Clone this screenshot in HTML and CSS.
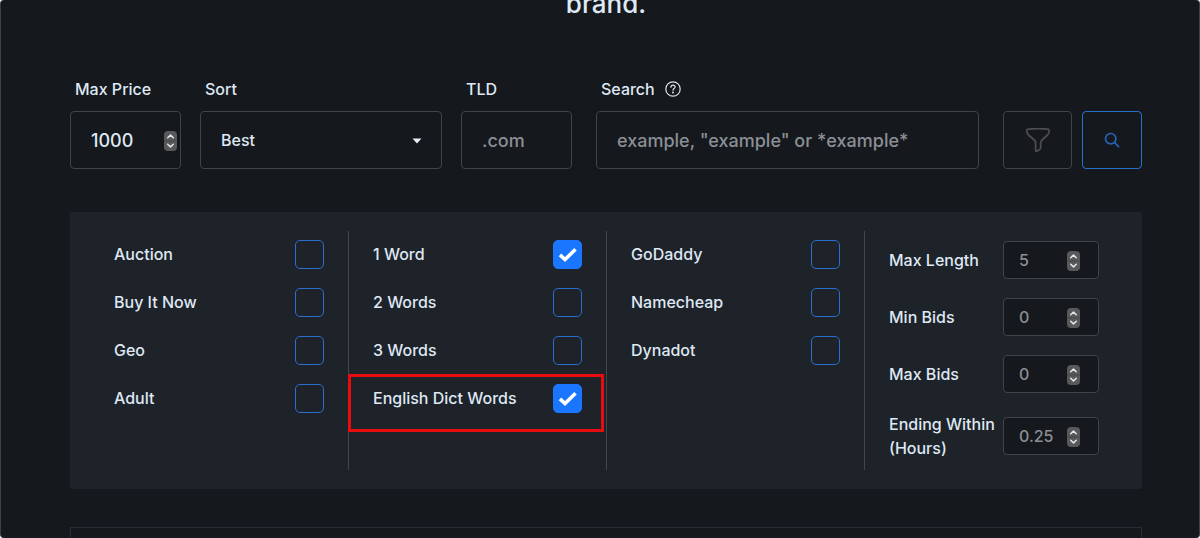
FILE: index.html
```html
<!DOCTYPE html>
<html lang="en">
<head>
<meta charset="utf-8">
<meta name="viewport" content="width=device-width, initial-scale=1">
<title>Domain search</title>
<link rel="stylesheet" href="styles.css">
</head>
<body>
<svg class="defs" aria-hidden="true">
  <symbol id="stepper" viewBox="0 0 13 20">
    <rect width="13" height="20" rx="4" fill="#58595b"/>
    <path d="M0 10h13" stroke="#47484a"/>
    <path d="M3.7 6.8 6.5 4.1l2.8 2.7M3.7 13.2l2.8 2.7 2.8-2.7" fill="none" stroke="#e4e5e6" stroke-width="1.5" stroke-linecap="round" stroke-linejoin="round"/>
  </symbol>
</svg>
<main class="window">
  <h1 class="headline">brand.</h1>

  <form class="search">
    <div class="field field-small">
      <label for="price">Max Price</label>
      <div class="control"><input class="box" id="price" type="number" value="1000"><svg class="stepper"><use href="#stepper"/></svg></div>
    </div>
    <div class="field field-sort">
      <label for="sort">Sort</label>
      <div class="control">
        <select class="box" id="sort"><option>Best</option></select>
        <svg class="caret" viewBox="0 0 10 6"><path d="M0.5 0.5h9L5 5.5z" fill="#e6edf5"/></svg>
      </div>
    </div>
    <div class="field field-small">
      <label for="tld">TLD</label>
      <div class="control"><input class="box" id="tld" type="text" placeholder=".com"></div>
    </div>
    <div class="field field-search">
      <div class="label-row">
        <label for="query">Search</label>
        <svg class="help" viewBox="0 0 16 16" fill="none" stroke="#dfe3e8" stroke-width="1.2" stroke-linecap="round"><circle cx="8" cy="8" r="7.2"/><path d="M5.9 6.2c0-1.3.9-2.1 2.1-2.1s2.1.8 2.1 1.9c0 1.5-2.1 1.6-2.1 3.2"/><circle cx="8" cy="11.6" r=".4" fill="#dfe3e8"/></svg>
      </div>
      <div class="control"><input class="box" id="query" type="text" placeholder='example, "example" or *example*'></div>
    </div>
    <div class="actions">
      <button class="button button-filter" type="button" aria-label="Filters"><svg viewBox="0 0 24 24" fill="none" stroke="#4a4c50" stroke-width="1.8" stroke-linejoin="round"><path d="M2 1.2Q12-.1 22 1.2 23.700 1.600 23.200 3.600 23 5.700 21 7.500L16 12Q14.700 13.300 14.700 15V19.500Q14.700 21.200 13 22L10.600 23.100Q9.600 23.300 9.600 22.200V15Q9.600 13.300 8.300 12L3 7.500Q1.200 5.900.8 3.600.5 1.600 2 1.200Z"/></svg></button>
      <button class="button button-search" type="submit" aria-label="Search"><svg viewBox="0 0 16 16" fill="none" stroke="#2563bd" stroke-width="1.7" stroke-linecap="round"><circle cx="6.700" cy="6.700" r="5.200"/><path d="m10.600 10.600 4 4"/></svg></button>
    </div>
  </form>

  <section class="filters">
    <div class="column">
      <label class="option">Auction<input type="checkbox"></label>
      <label class="option">Buy It Now<input type="checkbox"></label>
      <label class="option">Geo<input type="checkbox"></label>
      <label class="option">Adult<input type="checkbox"></label>
    </div>
    <div class="column">
      <label class="option">1 Word<input type="checkbox" checked></label>
      <label class="option">2 Words<input type="checkbox"></label>
      <label class="option">3 Words<input type="checkbox"></label>
      <label class="option highlighted">English Dict Words<input type="checkbox" checked></label>
    </div>
    <div class="column">
      <label class="option">GoDaddy<input type="checkbox"></label>
      <label class="option">Namecheap<input type="checkbox"></label>
      <label class="option">Dynadot<input type="checkbox"></label>
    </div>
    <div class="column limits">
      <div class="limit"><label for="length">Max Length</label><div class="control"><input class="box" id="length" type="number" placeholder="5"><svg class="stepper"><use href="#stepper"/></svg></div></div>
      <div class="limit"><label for="minbids">Min Bids</label><div class="control"><input class="box" id="minbids" type="number" placeholder="0"><svg class="stepper"><use href="#stepper"/></svg></div></div>
      <div class="limit"><label for="maxbids">Max Bids</label><div class="control"><input class="box" id="maxbids" type="number" placeholder="0"><svg class="stepper"><use href="#stepper"/></svg></div></div>
      <div class="limit"><label for="ending">Ending Within (Hours)</label><div class="control"><input class="box" id="ending" type="number" step="0.25" placeholder="0.25"><svg class="stepper"><use href="#stepper"/></svg></div></div>
    </div>
  </section>

  <section class="results"></section>
</main>
</body>
</html>
```
FILE: styles.css
```css
* { box-sizing: border-box; }

body {
  margin: 0;
  background: #fff;
  color: #dfe8f4;
  font-family: Inter, "Liberation Sans", sans-serif;
  font-size: 16px;
  font-weight: 500;
  line-height: 24px;
}

.defs { position: absolute; width: 0; height: 0; }

.window {
  display: flex;
  flex-direction: column;
  height: 100vh;
  padding: 0 57px 0 69px;
  overflow: hidden;
  background: #15181c;
  border: 1px solid #3c3f43;
  border-width: 0 1px;
  border-radius: 4px;
}

.headline {
  flex: none;
  margin: -14px 0 55px;
  font-size: 26px;
  font-weight: 500;
  line-height: 36px;
  text-align: center;
}

.search { display: flex; align-items: flex-end; }

.field { display: flex; flex-direction: column; gap: 10px; margin-right: 19px; }
.field > label, .label-row { padding-left: 5px; }
.field-small { flex: 0 1 111px; min-width: 0; }
.field-sort { flex: 0 1 242px; min-width: 0; }
.field-search { flex: 1; min-width: 0; margin: 0 24px 0 5px; }
.label-row { display: flex; align-items: center; gap: 10px; }
.help { width: 16px; height: 16px; }

.control { position: relative; }

.box {
  display: block;
  width: 100%;
  height: 58px;
  margin: 0;
  padding: 0 20px;
  appearance: none;
  color: inherit;
  font-family: inherit;
  font-size: 18px;
  font-weight: inherit;
  background: #15181c;
  border: 1px solid #404347;
  border-radius: 4px;
}
select.box { font-size: 16px; }
.box::placeholder { color: #8b8f96; opacity: 1; }
.box[type="number"] { appearance: textfield; }
.box::-webkit-inner-spin-button { appearance: none; margin: 0; }

.stepper {
  position: absolute;
  top: 20px;
  right: 4px;
  width: 13px;
  height: 20px;
  pointer-events: none;
}

.caret {
  position: absolute;
  top: 27px;
  right: 20px;
  width: 10px;
  height: 6px;
  pointer-events: none;
}

.actions { display: flex; gap: 10px; }
.button {
  display: grid;
  place-items: center;
  height: 58px;
  padding: 0;
  background: transparent;
  border: 1px solid #404347;
  border-radius: 4px;
}
.button-filter { width: 69px; }
.button-filter svg { width: 24px; height: 24px; }
.button-search { width: 60px; border-color: #2b6ed0; }
.button-search svg { width: 16px; height: 16px; }

.filters {
  display: grid;
  grid-template-columns: repeat(4, 1fr);
  margin-top: 43px;
  padding: 19px 20px;
  background: #1e2229;
  border-radius: 2px;
}

.column {
  display: flex;
  flex-direction: column;
  gap: 19px;
  min-width: 0;
  padding: 9px 24px 10px;
}
.column + .column { border-left: 1px solid #43474c; }

.option {
  position: relative;
  display: flex;
  justify-content: space-between;
  height: 29px;
  line-height: 29px;
}
.option input {
  flex: none;
  width: 29px;
  height: 29px;
  margin: 0;
  appearance: none;
  border: 1px solid #2b6ed0;
  border-radius: 5px;
}
.option input:checked {
  background: #1b76ff url("data:image/svg+xml,%3Csvg xmlns='http://www.w3.org/2000/svg' viewBox='0 0 27 27'%3E%3Cpath d='M6 13.900 11 18.600 21.500 8.200' fill='none' stroke='white' stroke-width='3.600'/%3E%3C/svg%3E") center / 27px no-repeat;
  border-color: #1b76ff;
}

.highlighted::after {
  content: "";
  position: absolute;
  inset: -10px -22px -19px -25px;
  border: 3px solid #e60c10;
  pointer-events: none;
}

.limits { padding: 10px 23px 10px 24px; }
.limit { display: flex; align-items: center; justify-content: space-between; }
.limit label { flex: 0 1 112px; }
.limit .control { flex: none; width: 96px; }
.limit .box { height: 38px; padding: 0 15px; font-size: 16px; }
.limit .stepper { top: 10px; right: 19px; }

.results {
  flex: 1;
  margin-top: 38px;
  border: 1px solid #2a2e34;
  border-bottom: 0;
}
```
